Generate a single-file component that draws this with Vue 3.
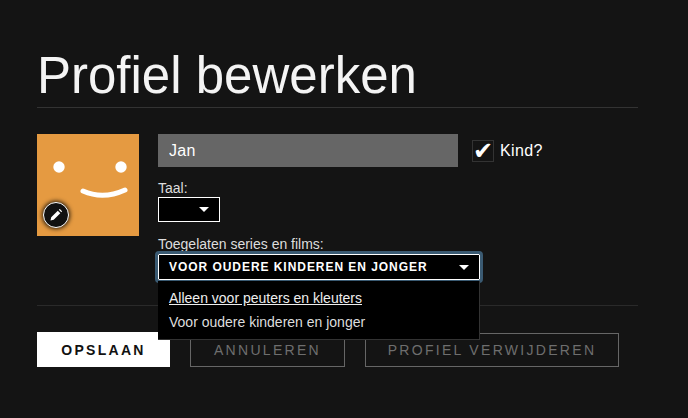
<template>
  <div class="edit-profile">
    <h1>Profiel bewerken</h1>

    <div class="profile-row">
      <div class="avatar">
        <svg class="face" width="102" height="102" viewBox="0 0 102 102">
          <circle cx="22" cy="33" r="5.7" fill="#fff" />
          <circle cx="84" cy="33" r="5.7" fill="#fff" />
          <path d="M46 57 Q66 66 88 56" fill="none" stroke="#fff" stroke-width="5" stroke-linecap="round" />
        </svg>
        <div class="edit-badge">
          <svg width="14" height="14" viewBox="0 0 14 14">
            <path d="M1.5 12.5 L2.2 9.3 L8.8 2.7 L11.3 5.2 L4.7 11.8 Z M9.8 1.7 L10.8 0.9 L13.1 3.2 L12.3 4.2 Z" fill="#fff" />
          </svg>
        </div>
      </div>

      <div class="fields">
        <div class="name-row">
          <input class="name-input" type="text" value="Jan" />
          <div class="checkbox">✔</div>
          <span class="kind">Kind?</span>
        </div>

        <label class="field-label lang-label">Taal:</label>
        <div class="select small">
          <span class="caret"></span>
        </div>

        <label class="field-label rating-label">Toegelaten series en films:</label>
        <div class="rating-wrap">
          <div class="select wide">
            <span>VOOR OUDERE KINDEREN EN JONGER</span>
            <span class="caret"></span>
          </div>
          <ul class="menu">
            <li class="active">Alleen voor peuters en kleuters</li>
            <li>Voor oudere kinderen en jonger</li>
          </ul>
        </div>
      </div>
    </div>

    <div class="actions">
      <button class="btn primary">OPSLAAN</button>
      <button class="btn">ANNULEREN</button>
      <button class="btn">PROFIEL VERWIJDEREN</button>
    </div>
  </div>
</template>

<script setup>
</script>

<style>
html, body {
  margin: 0;
  background: #141414;
}
</style>

<style scoped>
.edit-profile {
  width: 601px;
  height: 418px;
  box-sizing: border-box;
  margin-left: 37px;
  padding-top: 47px;
  font-family: "Liberation Sans", Arial, sans-serif;
  color: #fff;
}

h1 {
  margin: 0;
  height: 60px;
  font-size: 51px;
  line-height: 58px;
  font-weight: 400;
  border-bottom: 1px solid #333;
  color: #f4f4f4;
}

.profile-row {
  display: flex;
  gap: 19px;
  height: 171px;
  margin-top: 26px;
  border-bottom: 1px solid #2a2a2a;
}

.avatar {
  position: relative;
  width: 102px;
  height: 102px;
  background: #e59a41;
}

.face {
  display: block;
}

.edit-badge {
  position: absolute;
  left: 6px;
  top: 68px;
  width: 26px;
  height: 26px;
  box-sizing: border-box;
  border: 1px solid #fff;
  border-radius: 50%;
  background: #111;
  box-shadow: 0 0 4px 1px rgb(0 0 0 / 0.8);
  display: flex;
  align-items: center;
  justify-content: center;
}

.fields {
  flex: 1;
}

.name-row {
  display: flex;
  align-items: center;
}

.name-input {
  width: 300px;
  height: 33px;
  box-sizing: border-box;
  border: none;
  padding: 0 11px;
  background: #666;
  color: #fff;
  font-family: inherit;
  font-size: 16px;
  letter-spacing: 0.3px;
}

.checkbox {
  width: 22px;
  height: 22px;
  box-sizing: border-box;
  margin-left: 14px;
  border: 1px solid #333;
  background: #141414;
  font-family: "DejaVu Sans", sans-serif;
  font-size: 24px;
  line-height: 20px;
  text-align: center;
  display: flex;
  justify-content: center;
}

.kind {
  margin-left: 6px;
  font-size: 16px;
  letter-spacing: 0.4px;
}

.field-label {
  display: block;
  font-size: 14px;
  line-height: 15px;
  color: #ddd;
}

.lang-label {
  margin-top: 14px;
}

.rating-label {
  margin-top: 15px;
}

.select {
  display: flex;
  align-items: center;
  justify-content: space-between;
  box-sizing: border-box;
  border: 1px solid #fff;
  background: #000;
}

.small {
  width: 62px;
  height: 25px;
  margin-top: 1px;
  padding: 0 10px 0 0;
  justify-content: flex-end;
}

.wide {
  width: 322px;
  height: 26px;
  padding: 0 10px;
  font-size: 12px;
  font-weight: 700;
  letter-spacing: 0.95px;
  outline: 3px solid #3a5a72;
  border-radius: 1px;
}

.caret {
  width: 0;
  height: 0;
  border-left: 5px solid transparent;
  border-right: 5px solid transparent;
  border-top: 5px solid #fff;
}

.rating-wrap {
  position: relative;
  margin-top: 2px;
}

.menu {
  position: absolute;
  left: 0;
  top: 27px;
  width: 322px;
  height: 59px;
  box-sizing: border-box;
  margin: 0;
  padding: 5px 11px 0;
  list-style: none;
  background: #000;
  border-right: 1px solid #333;
  border-bottom: 1px solid #333;
  font-size: 14px;
  color: #ddd;
}

.menu li {
  line-height: 24px;
}

.menu .active {
  text-decoration: underline;
  color: #eee;
}

.actions {
  display: flex;
  gap: 20px;
  margin-top: 26px;
  align-items: flex-start;
}

.btn {
  height: 34px;
  margin-top: 1px;
  box-sizing: border-box;
  border: 1px solid #666;
  background: transparent;
  color: #6e6e6e;
  font-family: inherit;
  font-size: 14px;
  letter-spacing: 2.3px;
  padding: 0;
  width: 155px;
}

.btn:last-child {
  width: 254px;
}

.btn.primary {
  width: 133px;
  height: 35px;
  margin-top: 0;
  border: none;
  background: #fff;
  color: #111;
  font-weight: 700;
}
</style>
